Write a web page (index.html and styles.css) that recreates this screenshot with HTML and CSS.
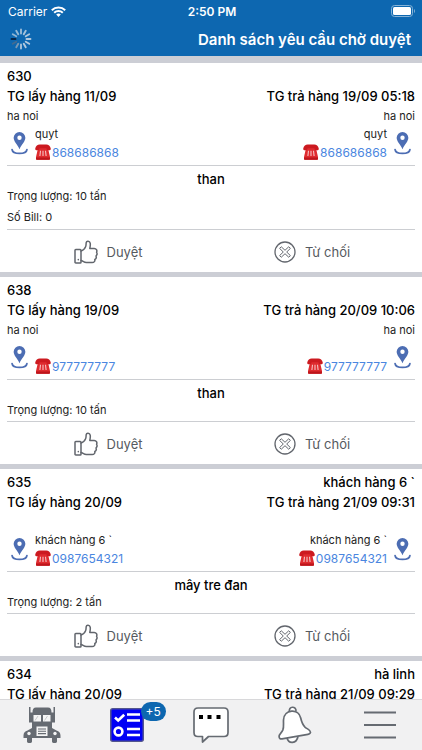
FILE: index.html
```html
<!DOCTYPE html>
<html lang="vi">
<head>
<meta charset="utf-8">
<meta name="viewport" content="width=device-width, initial-scale=1">
<title>Danh sách yêu cầu chờ duyệt</title>
<link rel="stylesheet" href="styles.css">
</head>
<body>
<svg class="sprite" aria-hidden="true">
  <symbol id="pin" viewBox="0 0 16 22">
    <path fill-rule="evenodd" d="M8 0a5.600 5.600 0 0 0-5.600 5.600c0 3.400 3.400 6.300 5.600 10.800 2.200-4.500 5.600-7.400 5.600-10.800A5.600 5.600 0 0 0 8 0zm0 3.400a2.100 2.100 0 1 1 0 4.200 2.100 2.100 0 0 1 0-4.200z" fill="#4c6db3"/>
    <path d="M.9 16.800c.3 2.500 3.600 3.700 7.100 3.700s6.800-1.200 7.100-3.700" fill="none" stroke="#4c6db3" stroke-width="1.700" stroke-linecap="round"/>
  </symbol>
  <symbol id="phone" viewBox="0 0 16 16">
    <path d="M3.500 3h9l1 3.500 1.500 6.500v1.800c0 .6-.3.900-.9.900H1.900c-.6 0-.9-.3-.9-.9V13l1.500-6.500z" fill="#df2b2f"/>
    <path d="M1 13.600h14v1.300c0 .5-.3.800-.9.800H1.900c-.6 0-.9-.3-.9-.8z" fill="#bd151b"/>
    <path d="M.3 4.300C.8 1.600 2.600.4 4.700.4h6.600c2.100 0 3.900 1.200 4.400 3.900.2 1.200-.2 1.900-1 1.900h-1.800c-.8 0-1.100-.5-1.300-1.200l-.2-.8H4.600L4.400 5c-.2.700-.5 1.200-1.300 1.200H1.300c-.8 0-1.200-.7-1-1.900z" fill="#cc1a20"/>
    <path d="M5.500 6.700 4.900 12M8 6.700V12M10.500 6.700l.6 5.300" stroke="#f6c4c4" stroke-width="1.100"/>
  </symbol>
  <symbol id="thumb" viewBox="0 0 24 24">
    <g fill="none" stroke="#62666d" stroke-width="1.500" stroke-linejoin="round" stroke-linecap="round">
      <rect x="1" y="9.500" width="6" height="13.500" rx=".8"/>
      <path d="M7 20.500c1.800.2 2.800 2 5.400 2h5.800c2 0 3-1.400 2.600-3 1.300-.7 1.800-2.100 1.200-3.500 1.100-1 1.300-2.500.6-3.700.8-1.900-.3-3.800-2.400-3.800h-4.400c.5-2.200.7-4.300.3-5.700-.5-2-3.600-2.300-3.900-.2-.2 1.500 0 2.900-.6 4.200-.8 1.900-2.300 3.700-4.600 4.200"/>
      <path d="M4.300 19.600v.2"/>
    </g>
  </symbol>
  <symbol id="reject" viewBox="0 0 22 22">
    <circle cx="11" cy="11" r="10" fill="none" stroke="#62666d" stroke-width="1.300"/>
    <path d="M7.300 5.800 11 9.300l3.700-3.500 1.700 1.600-3.700 3.600 3.700 3.600-1.700 1.600L11 12.700l-3.700 3.500-1.700-1.600L9.300 11 5.600 7.400z" fill="none" stroke="#62666d" stroke-width="1" stroke-linejoin="round"/>
  </symbol>
</svg>

<header class="top">
  <div class="status">
    <div class="carrier">Carrier
      <svg width="15" height="11" viewBox="0 0 15 11" aria-hidden="true"><g fill="none" stroke="#fff" stroke-width="2"><path d="M.8 4.200a9.500 9.500 0 0 1 13.400 0"/><path d="M3.200 6.700a6.100 6.100 0 0 1 8.600 0"/></g><path d="M5.200 8.500a3.300 3.300 0 0 1 4.600 0L7.500 10.900z" fill="#fff"/></svg>
    </div>
    <div class="clock">2:50 PM</div>
    <div class="battery"><svg width="25" height="12" viewBox="0 0 25 12" role="img" aria-label="Pin"><rect x=".5" y=".5" width="21" height="11" rx="3" fill="none" stroke="#86b3d7"/><rect x="2" y="2" width="18" height="8" rx="1.500" fill="#fff"/><path d="M23 4v4c1.300-.6 1.300-3.400 0-4z" fill="#86b3d7"/></svg></div>
  </div>
  <div class="titlebar">
    <svg width="22" height="22" viewBox="-11 -11 22 22" role="img" aria-label="Đang tải"><g stroke-width="1.900" stroke-linecap="round">
      <path d="M0-5.500V-9.500" stroke="#9abbd7"/><path d="M0-5.500V-9.500" transform="rotate(30)" stroke="#a5c2da"/><path d="M0-5.500V-9.500" transform="rotate(60)" stroke="#adc6dc"/><path d="M0-5.500V-9.500" transform="rotate(90)" stroke="#b2c9de"/><path d="M0-5.500V-9.500" transform="rotate(120)" stroke="#b2c9de"/><path d="M0-5.500V-9.500" transform="rotate(150)" stroke="#b2c9de"/><path d="M0-5.500V-9.500" transform="rotate(180)" stroke="#a9c2d8"/><path d="M0-5.500V-9.500" transform="rotate(210)" stroke="#7b99b4"/><path d="M0-5.500V-9.500" transform="rotate(240)" stroke="#446b90"/><path d="M0-5.500V-9.500" transform="rotate(270)" stroke="#06264a"/><path d="M0-5.500V-9.500" transform="rotate(300)" stroke="#8fb4d3"/><path d="M0-5.500V-9.500" transform="rotate(330)" stroke="#94b8d5"/></g></svg>
    <h1>Danh sách yêu cầu chờ duyệt</h1>
  </div>
</header>

<main class="list">
  <article class="card">
    <div class="row strong"><span>630</span><span></span></div>
    <div class="row strong"><span>TG lấy hàng 11/09</span><span>TG trả hàng 19/09 05:18</span></div>
    <div class="row"><span>ha noi</span><span>ha noi</span></div>
    <div class="contacts">
      <div class="contact"><svg class="pin"><use href="#pin"/></svg><div><p>quyt</p><a href="tel:868686868"><svg class="phone"><use href="#phone"/></svg>868686868</a></div></div>
      <div class="contact end"><svg class="pin"><use href="#pin"/></svg><div><p>quyt</p><a href="tel:868686868"><svg class="phone"><use href="#phone"/></svg>868686868</a></div></div>
    </div>
    <div class="cargo"><h2>than</h2><p>Trọng lượng: 10 tấn</p><p class="bill">Số Bill: 0</p></div>
    <div class="actions">
      <button type="button"><svg class="thumb"><use href="#thumb"/></svg>Duyệt</button>
      <button type="button"><svg class="reject"><use href="#reject"/></svg>Từ chối</button>
    </div>
  </article>

  <article class="card">
    <div class="row strong"><span>638</span><span></span></div>
    <div class="row strong"><span>TG lấy hàng 19/09</span><span>TG trả hàng 20/09 10:06</span></div>
    <div class="row"><span>ha noi</span><span>ha noi</span></div>
    <div class="contacts">
      <div class="contact"><svg class="pin"><use href="#pin"/></svg><div><p></p><a href="tel:977777777"><svg class="phone"><use href="#phone"/></svg>977777777</a></div></div>
      <div class="contact end"><svg class="pin"><use href="#pin"/></svg><div><p></p><a href="tel:977777777"><svg class="phone"><use href="#phone"/></svg>977777777</a></div></div>
    </div>
    <div class="cargo"><h2>than</h2><p>Trọng lượng: 10 tấn</p></div>
    <div class="actions">
      <button type="button"><svg class="thumb"><use href="#thumb"/></svg>Duyệt</button>
      <button type="button"><svg class="reject"><use href="#reject"/></svg>Từ chối</button>
    </div>
  </article>

  <article class="card">
    <div class="row strong"><span>635</span><span>khách hàng 6 `</span></div>
    <div class="row strong"><span>TG lấy hàng 20/09</span><span>TG trả hàng 21/09 09:31</span></div>
    <div class="row"></div>
    <div class="contacts">
      <div class="contact"><svg class="pin"><use href="#pin"/></svg><div><p>khách hàng 6 `</p><a href="tel:0987654321"><svg class="phone"><use href="#phone"/></svg>0987654321</a></div></div>
      <div class="contact end"><svg class="pin"><use href="#pin"/></svg><div><p>khách hàng 6 `</p><a href="tel:0987654321"><svg class="phone"><use href="#phone"/></svg>0987654321</a></div></div>
    </div>
    <div class="cargo"><h2>mây tre đan</h2><p>Trọng lượng: 2 tấn</p></div>
    <div class="actions">
      <button type="button"><svg class="thumb"><use href="#thumb"/></svg>Duyệt</button>
      <button type="button"><svg class="reject"><use href="#reject"/></svg>Từ chối</button>
    </div>
  </article>

  <article class="card">
    <div class="row strong"><span>634</span><span>hà linh</span></div>
    <div class="row strong"><span>TG lấy hàng 20/09</span><span>TG trả hàng 21/09 09:29</span></div>
  </article>
</main>

<nav class="tabs">
  <a href="#xe" aria-label="Xe">
    <svg width="38" height="38" viewBox="0 0 38 38"><path d="M6 1h1.500v5.500h2C9.500 3 10.500 1.500 13 1.500h12c2.500 0 3.500 1.500 3.500 5h2V1H32v15.500h-3V22l4.500 2.500c2.500.5 4 2.500 4 5V32H34v3.500c0 2-5 2-5 0V32H9v3.500c0 2-5 2-5 0V32H.5v-2.500c0-2.500 1.500-4.500 4-5L9 22v-5.500H6z" fill="#666b72"/><path d="M10.500 9h7.500v6.500h-7.500zM20 9h7.500v6.500H20zM13.500 20.500h11v9.500h-11z" fill="#f5f5f5"/><path d="M12 14.500 15 10M21.500 14.500l3-4.500" stroke="#c6c8cb" stroke-width="1"/><path d="M15 23h8M15 25.300h8M15 27.600h8" stroke="#666b72" stroke-width="1.100"/><circle cx="6" cy="27.500" r="1.700" fill="#f5f5f5"/><circle cx="32" cy="27.500" r="1.700" fill="#f5f5f5"/></svg>
  </a>
  <a href="#duyet" aria-label="Chờ duyệt" class="current">
    <svg width="34" height="34" viewBox="0 0 34 34"><rect x=".75" y=".75" width="32.500" height="32.500" rx="2" fill="#0000f5" stroke="#53568f" stroke-width="1.500"/><path d="M5 9.500l3.200 3 6-5.700" fill="none" stroke="#fff" stroke-width="2.600"/><circle cx="8.500" cy="23.500" r="3.900" fill="none" stroke="#fff" stroke-width="2.600"/><path d="M17 6.500h13M17 12.500h13M17 21h13M17 27h13" stroke="#fff" stroke-width="2.400"/></svg>
    <span class="badge">+5</span>
  </a>
  <a href="#tinnhan" aria-label="Tin nhắn">
    <svg width="36" height="36" viewBox="0 0 36 36"><path d="M5 1h26Q35 1 35 5v20.500q0 4-4 4H15.500L9.500 35v-5.500H5q-4 0-4-4V5Q1 1 5 1z" fill="#fff" stroke="#666b72" stroke-width="1.700" stroke-linejoin="round"/><path d="M6 8h4v4H6zM14.500 8h4v4h-4zM23.500 8h4v4h-4z"/></svg>
  </a>
  <a href="#thongbao" aria-label="Thông báo">
    <svg width="36" height="38" viewBox="0 0 36 38"><g fill="#fff" stroke="#666b72" stroke-width="1.700" stroke-linejoin="round"><path d="M12.500 6c-1.500-6 7-6.500 6.500-.6M10 32c1.500 6 9.500 6 11-1.500"/><path d="M6.500 14C6.800 8.500 10.500 5.500 14.700 5.200s8 2.300 9 6.800c.9 4 1.500 6.500 4.500 9.300 2.500 2 5.500 2.600 5.300 5-.1 1.500-1.300 1.800-2.600 2L5 32.800c-1.800.3-2.900-.5-2.900-2.200 0-2.600 2.300-3.400 3.700-6.400 1.300-3 .5-6.600.7-10.200z"/></g></svg>
  </a>
  <a href="#menu" aria-label="Menu">
    <svg width="34" height="28" viewBox="0 0 34 28"><path d="M1 1.500h32M1 14h32M1 26.500h32" stroke="#666b72" stroke-width="1.800"/></svg>
  </a>
</nav>
</body>
</html>
```
FILE: styles.css
```css
* { box-sizing: border-box; margin: 0; padding: 0; }

body {
  display: flex;
  flex-direction: column;
  height: 100vh;
  background: #fff;
  color: #000;
  font-family: Inter, "Noto Sans", sans-serif;
  font-size: 11px;
}

a { text-decoration: none; color: inherit; }
svg { display: block; flex: none; }
.sprite { position: absolute; width: 0; height: 0; }

.top { background: #0d67b0; color: #fff; }

.status {
  display: grid;
  grid-template-columns: 1fr auto 1fr;
  align-items: center;
  height: 22px;
  padding: 0 6px 0 8px;
}
.carrier { display: flex; align-items: center; gap: 4px; font-size: 12px; }
.clock { font-size: 12px; font-weight: 600; }
.battery { display: flex; justify-content: flex-end; }

.titlebar {
  display: flex;
  align-items: center;
  justify-content: space-between;
  height: 34px;
  padding: 0 11px 0 10px;
}
h1 { font-size: 15px; font-weight: 600; }

.list {
  flex: 1;
  min-height: 0;
  overflow-y: auto;
  scrollbar-width: none;
}

.card { border-top: 5px solid #ccced5; padding: 3px 7px 0; }
.card:first-child { border-top-width: 7px; }

.row {
  display: flex;
  justify-content: space-between;
  height: 20px;
  line-height: 20px;
  color: #222;
}
.strong { font-size: 13px; font-weight: 500; color: #000; }

.contacts {
  display: flex;
  justify-content: space-between;
  height: 40px;
  border-bottom: 1px solid #ccced2;
}
.contact { display: flex; gap: 7px; padding-left: 4px; }
.contact.end { flex-direction: row-reverse; padding: 0 4px 0 0; text-align: right; }
.contact p { height: 17px; line-height: 17px; color: #222; }
.contact a {
  display: flex;
  align-items: center;
  justify-content: flex-end;
  height: 18px;
  gap: 1px;
  color: #4a86e0;
  font-size: 12px;
}
.contact:not(.end) a { justify-content: flex-start; }
.pin { width: 17px; height: 23px; margin-top: 6px; }
.phone { width: 16px; height: 16px; }

.cargo { padding: 3px 0 1px; border-bottom: 1px solid #ccced2; }
.cargo h2 { font-size: 13px; font-weight: 500; line-height: 20px; text-align: center; }
.cargo p { height: 17px; line-height: 14px; color: #222; }
.cargo .bill { height: 22px; line-height: 22px; }

.actions { display: flex; height: 42px; }
.actions button {
  flex: 1;
  display: flex;
  align-items: center;
  justify-content: center;
  gap: 9px;
  padding: 2px 2px 0 0;
  border: 0;
  background: none;
  color: #555a60;
  font: 13px Inter, "Noto Sans", sans-serif;
}
.thumb { width: 24px; height: 24px; }
.reject { width: 22px; height: 22px; }

.tabs {
  display: flex;
  height: 51px;
  background: #f1f1f2;
  border-top: 1px solid #d8d8da;
}
.tabs a { flex: 1; display: flex; align-items: center; justify-content: center; position: relative; }
.badge {
  position: absolute;
  top: 2px;
  left: calc(50% + 14px);
  padding: 0 5px;
  border-radius: 10px;
  background: #0d67b0;
  color: #fff;
  font-size: 12px;
  line-height: 19px;
}
```
